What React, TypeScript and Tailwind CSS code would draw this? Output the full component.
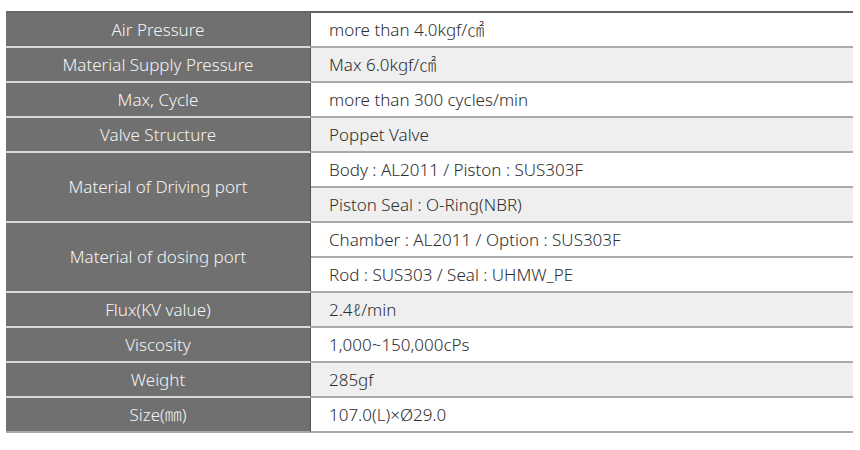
type Group = { label: string; values: { text: string; shade: boolean }[] };

const specs: Group[] = [
  { label: "Air Pressure", values: [{ text: "more than 4.0kgf/㎠", shade: false }] },
  { label: "Material Supply Pressure", values: [{ text: "Max 6.0kgf/㎠", shade: true }] },
  { label: "Max, Cycle", values: [{ text: "more than 300 cycles/min", shade: false }] },
  { label: "Valve Structure", values: [{ text: "Poppet Valve", shade: true }] },
  {
    label: "Material of Driving port",
    values: [
      { text: "Body : AL2011 / Piston : SUS303F", shade: false },
      { text: "Piston Seal : O-Ring(NBR)", shade: true },
    ],
  },
  {
    label: "Material of dosing port",
    values: [
      { text: "Chamber : AL2011 / Option : SUS303F", shade: false },
      { text: "Rod : SUS303 / Seal : UHMW_PE", shade: false },
    ],
  },
  { label: "Flux(KV value)", values: [{ text: "2.4ℓ/min", shade: true }] },
  { label: "Viscosity", values: [{ text: "1,000~150,000cPs", shade: false }] },
  { label: "Weight", values: [{ text: "285gf", shade: true }] },
  { label: "Size(㎜)", values: [{ text: "107.0(L)×Ø29.0", shade: false }] },
];

export default function App() {
  return (
    <div
      className="w-[860px] h-[450px] bg-white pt-[11px] pl-[6px] text-[17px] font-light"
      style={{ fontFamily: '"Noto Sans", "Noto Sans CJK KR", sans-serif' }}
    >
      <div className="w-[847px] border-t-2 border-[#666666]">
        {specs.map((group, gi) => {
          const last = gi === specs.length - 1;
          return (
            <div key={group.label} className="flex">
              <div
                className={`w-[305px] flex items-center justify-center bg-[#707070] text-[#f4f4f4] border-r border-r-[#555555] border-b-2 ${
                  last ? "border-b-[#aaaaaa]" : "border-b-[#d9d9d9]"
                }`}
              >
                {group.label}
              </div>
              <div className="flex-1 flex flex-col">
                {group.values.map((v) => (
                  <div
                    key={v.text}
                    className={`h-[35px] flex items-center pl-[18px] text-[#2e2e2e] border-b-2 border-[#aaaaaa] ${
                      v.shade ? "bg-[#efefef]" : "bg-white"
                    }`}
                  >
                    {v.text}
                  </div>
                ))}
              </div>
            </div>
          );
        })}
      </div>
    </div>
  );
}
